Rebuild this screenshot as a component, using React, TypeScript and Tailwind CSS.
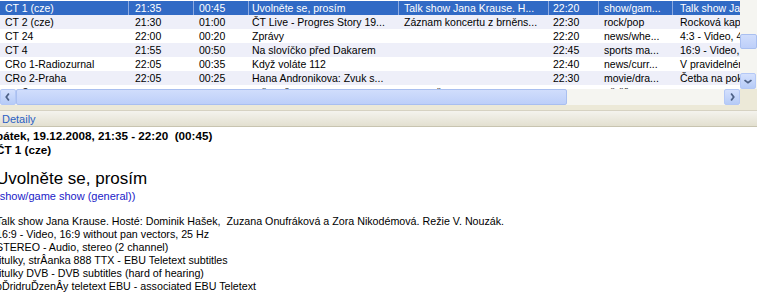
import React from "react";

type Row = {
    channel: string;
    start: string;
    length: string;
    title: string;
    desc: string;
    end: string;
    genre: string;
    info: string;
};

const rows: Row[] = [
    { channel: "CT 1 (cze)", start: "21:35", length: "00:45", title: "Uvolněte se, prosím", desc: "Talk show Jana Krause. H...", end: "22:20", genre: "show/gam...", info: "Talk show Jana Krause" },
    { channel: "CT 2 (cze)", start: "21:30", length: "01:00", title: "ČT Live - Progres Story 19...", desc: "Záznam koncertu z brněns...", end: "22:30", genre: "rock/pop", info: "Rocková kapela" },
    { channel: "CT 24", start: "22:00", length: "00:20", title: "Zprávy", desc: "", end: "22:20", genre: "news/whe...", info: "4:3 - Video, 4:3" },
    { channel: "CT 4", start: "21:55", length: "00:50", title: "Na slovíčko před Dakarem", desc: "", end: "22:45", genre: "sports ma...", info: "16:9 - Video, 16:9" },
    { channel: "CRo 1-Radiozurnal", start: "22:05", length: "00:35", title: "Když voláte 112", desc: "", end: "22:40", genre: "news/curr...", info: "V pravidelném" },
    { channel: "CRo 2-Praha", start: "22:05", length: "00:25", title: "Hana Andronikova: Zvuk s...", desc: "", end: "22:30", genre: "movie/dra...", info: "Četba na pokračování" },
    { channel: "crn 3 wava", start: "", length: "", title: "ruč no ň", desc: "ma ne č", end: "", genre: "ně čš", info: "" },
];

// column widths follow the list view header (not visible)
const cols = [
    { key: "channel", w: "w-[129px] pl-[5px]" },
    { key: "start", w: "w-[65px] pl-[6px]" },
    { key: "length", w: "w-[55px] pl-[5px]" },
    { key: "title", w: "w-[150px] pl-[3px]" },
    { key: "desc", w: "w-[150px] pl-[5px]" },
    { key: "end", w: "w-[50px] pl-[4px]" },
    { key: "genre", w: "w-[74px] pl-[5px]" },
    { key: "info", w: "w-[120px] pl-[7px]" },
] as const;

const ArrowBtn = ({ dir }: { dir: "left" | "right" | "down" }) => {
    const d = dir === "left" ? "M9 4 L6 8 L9 12" : dir === "right" ? "M7 4 L10 8 L7 12" : "M4 7 L8 10 L12 7";
    return (
        <div className="w-[16px] h-[16px] shrink-0 rounded-[2px] border border-[#b4c8f6] bg-gradient-to-b from-[#d4e0fd] to-[#b6cbf7] flex items-center justify-center">
            <svg width="16" height="16" viewBox="0 0 16 16">
                <path d={d} fill="none" stroke="#4d6185" strokeWidth="2" />
            </svg>
        </div>
    );
};

const Thumb = ({ className }: { className: string }) => (
    <div className={`rounded-[2px] border border-[#a9bff0] bg-gradient-to-b from-[#d0ddfc] to-[#bdcff9] ${className}`} />
);

export default function App() {
    return (
        <div className="w-[757px] h-[302px] overflow-hidden bg-white text-[10.5px] text-black font-['Liberation_Sans',Arial,sans-serif]">
            {/* list + vertical scrollbar */}
            <div className="flex h-[89px]">
                <div className="w-[740px] overflow-hidden pt-[1px]">
                    {rows.map((r, i) => {
                        const sel = i === 0;
                        const bg = sel ? "bg-[#316ac5] text-white" : i % 2 === 1 ? "bg-[#eeeff9]" : "bg-white";
                        return (
                            <div key={i} className={`flex h-[14px] leading-[14px] w-max ${bg}`}>
                                {cols.map((c) => (
                                    <div key={c.key} className={`${c.w} shrink-0 overflow-hidden whitespace-nowrap ${sel ? "border-r border-[#8eaae0]" : ""}`}>
                                        {r[c.key]}
                                    </div>
                                ))}
                            </div>
                        );
                    })}
                </div>
                <div className="w-[17px] bg-[#f5f5f1] flex flex-col">
                    <div className="h-[34px]" />
                    <Thumb className="h-[15px] w-[17px]" />
                    <div className="flex-1" />
                    <ArrowBtn dir="down" />
                </div>
            </div>

            {/* horizontal scrollbar */}
            <div className="flex h-[16px]">
                <div className="w-[740px] flex bg-[#f5f5f1]">
                    <ArrowBtn dir="left" />
                    <Thumb className="w-[551px] h-[16px]" />
                    <div className="flex-1" />
                    <ArrowBtn dir="right" />
                </div>
                <div className="w-[17px] bg-[#ece9d8]" />
            </div>

            {/* splitter */}
            <div className="h-[6px] bg-[#ece9d8] border-b border-[#d6d2c2]" />

            {/* Detaily caption */}
            <div className="h-[16px] bg-gradient-to-b from-[#f4f3ee] to-[#e3e0d0] border-b border-[#c8c4b0] pl-[2px] leading-[16px] text-[11px] text-[#2a5fc4]">
                Detaily
            </div>

            {/* detail */}
            <div className="-ml-[4px] pt-[2px] text-[10.7px]">
                <div className="font-bold text-[11.7px] leading-[14px] whitespace-pre">pátek, 19.12.2008, 21:35 - 22:20  (00:45)</div>
                <div className="font-bold text-[11.7px] leading-[14px]">ČT 1 (cze)</div>
                <div className="mt-[12px] text-[17px] leading-[20px]">Uvolněte se, prosím</div>
                <div className="leading-[14px] text-[11px] text-[#1a1ac8]">(show/game show (general))</div>
                <div className="mt-[12px] leading-[13px]">
                    <div className="whitespace-pre">Talk show Jana Krause. Hosté: Dominik Hašek,  Zuzana Onufráková a Zora Nikodémová. Režie V. Nouzák.</div>
                    <div>16:9 - Video, 16:9 without pan vectors, 25 Hz</div>
                    <div>STEREO - Audio, stereo (2 channel)</div>
                    <div>titulky, strÂanka 888 TTX - EBU Teletext subtitles</div>
                    <div>titulky DVB - DVB subtitles (hard of hearing)</div>
                    <div>pĎridruĎzenÂy teletext EBU - associated EBU Teletext</div>
                </div>
            </div>
        </div>
    );
}
